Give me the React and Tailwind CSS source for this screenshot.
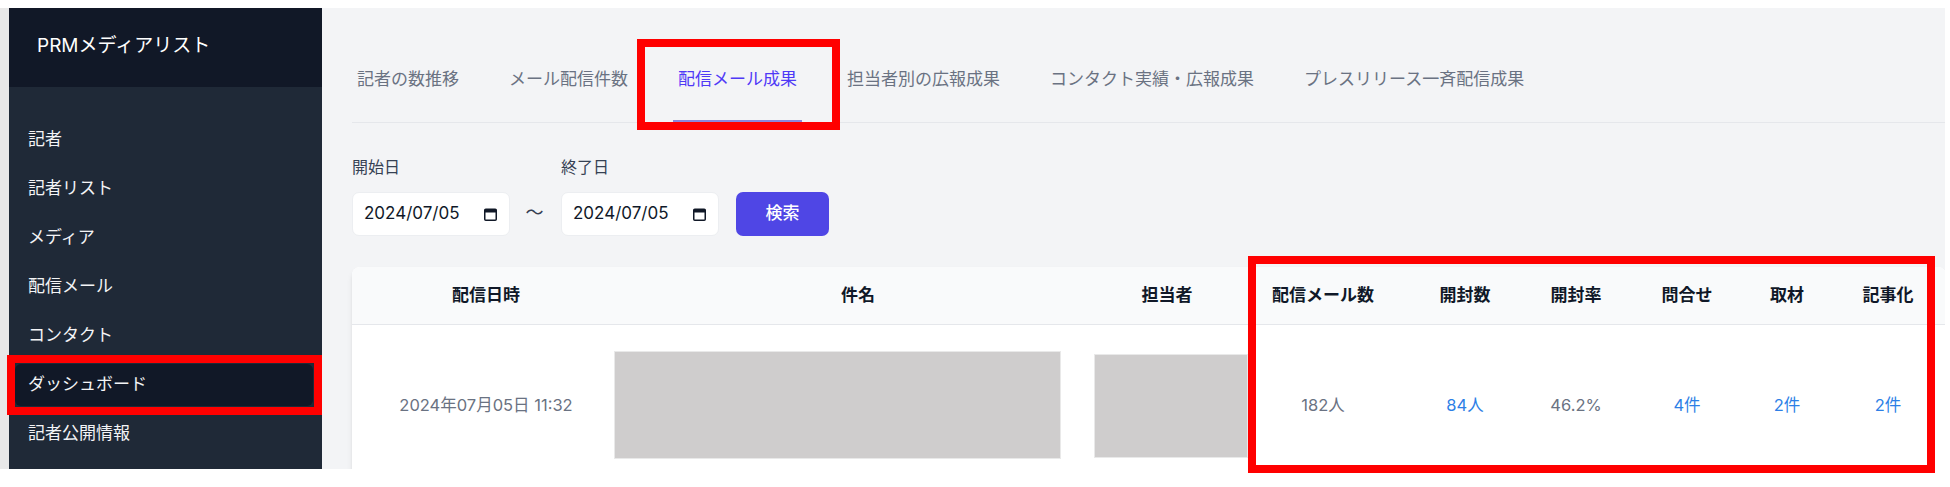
import React from "react";

const menuItems = [
  "記者",
  "記者リスト",
  "メディア",
  "配信メール",
  "コンタクト",
  "ダッシュボード",
  "記者公開情報",
];

const tabs = [
  "記者の数推移",
  "メール配信件数",
  "配信メール成果",
  "担当者別の広報成果",
  "コンタクト実績・広報成果",
  "プレスリリース一斉配信成果",
];

const headers = [
  { label: "配信日時", cls: "pl-[6px]" },
  { label: "件名", cls: "pl-[6px]" },
  { label: "担当者", cls: "" },
  { label: "配信メール数", cls: "" },
  { label: "開封数", cls: "" },
  { label: "開封率", cls: "" },
  { label: "問合せ", cls: "" },
  { label: "取材", cls: "" },
  { label: "記事化", cls: "" },
];

function CalendarIcon() {
  return (
    <svg width="13" height="14" viewBox="0 0 13 14" fill="none">
      <rect x="0.75" y="2.25" width="11.5" height="11" rx="1" stroke="#111827" strokeWidth="1.5" />
      <rect x="0.75" y="2.25" width="11.5" height="3.25" fill="#111827" />
    </svg>
  );
}

function DateField({ label, value }) {
  return (
    <div className="flex flex-col gap-[13px]">
      <span className="text-[16px] leading-[24px] text-gray-700">{label}</span>
      <div className="flex h-[44px] w-[158px] items-center justify-between rounded-[7px] border border-[#eceef1] bg-white pl-[11px] pr-[12px]">
        <span className="text-[17px] text-gray-900">{value}</span>
        <CalendarIcon />
      </div>
    </div>
  );
}

function RedBox({ className }) {
  return (
    <div
      className={`pointer-events-none absolute border-[8px] border-[#ff0000] ${className}`}
    />
  );
}

export default function App() {
  return (
    <div className="relative h-[487px] w-[1950px] overflow-hidden bg-white font-['Inter','Noto_Sans_CJK_JP',sans-serif]">
      <div className="mt-[8px] flex h-[461px]">
        <div className="w-[9px] bg-[#e8e8e8]" />

        {/* sidebar */}
        <aside className="flex w-[313px] flex-col bg-[#1f2937]">
          <div className="flex h-[79px] items-center bg-[#111827] pb-[2px] pl-[28px] text-[19px] text-white">
            PRMメディアリスト
          </div>
          <nav className="flex flex-col gap-[7px] pt-[32px]">
            {menuItems.map((item) => (
              <div
                key={item}
                className={`ml-[6px] mr-[9px] flex h-[42px] items-center rounded-[6px] pl-[13px] text-[17px] text-gray-100 ${
                  item === "ダッシュボード" ? "bg-[#111827]" : ""
                }`}
              >
                {item}
              </div>
            ))}
          </nav>
        </aside>

        {/* main */}
        <main className="w-[1623px] overflow-hidden bg-[#f3f4f6] pl-[30px]">
          <div className="mt-[30px] flex gap-[40px] border-b border-gray-200">
            {tabs.map((tab) => (
              <div
                key={tab}
                className={`flex h-[84px] items-center whitespace-nowrap px-[5px] text-[17px] ${
                  tab === "配信メール成果"
                    ? "border-b-2 border-[#8b87dc] pt-[2px] text-indigo-600"
                    : "text-gray-500"
                }`}
              >
                {tab}
              </div>
            ))}
          </div>

          <div className="mt-[32px] flex items-end">
            <DateField label="開始日" value="2024/07/05" />
            <div className="flex h-[44px] w-[51px] items-center justify-center pb-[4px] pr-[2px] text-[18px] text-gray-700">
              〜
            </div>
            <DateField label="終了日" value="2024/07/05" />
            <button className="ml-[17px] h-[44px] w-[93px] rounded-[7px] bg-[#4f46e5] text-[17px] font-medium text-white">
              検索
            </button>
          </div>

          <div className="mt-[31px] w-[1594px] rounded-t-lg bg-white shadow-md">
            <div className="grid h-[58px] grid-cols-[262px_482px_142px_170px_114px_108px_114px_86px_116px] items-center rounded-t-lg border-b border-gray-200 bg-[#f9fafb]">
              {headers.map((h) => (
                <div
                  key={h.label}
                  className={`text-center text-[17px] font-bold text-gray-900 ${h.cls}`}
                >
                  {h.label}
                </div>
              ))}
            </div>
            <div className="grid h-[160px] grid-cols-[262px_482px_142px_170px_114px_108px_114px_86px_116px] items-center text-[16.5px]">
              <div className="pl-[6px] text-center text-gray-500">2024年07月05日 11:32</div>
              <div>
                <div className="h-[108px] w-[447px] border border-[#e9e9e9] bg-[#cfcdcd]" />
              </div>
              <div>
                <div className="-ml-[2px] mt-[2px] h-[104px] w-[154px] border border-[#e9e9e9] bg-[#cfcdcd]" />
              </div>
              <div className="text-center text-gray-500">182人</div>
              <div className="text-center text-[#2d7fe6]">84人</div>
              <div className="text-center text-gray-500">46.2%</div>
              <div className="text-center text-[#2d7fe6]">4件</div>
              <div className="text-center text-[#2d7fe6]">2件</div>
              <div className="text-center text-[#2d7fe6]">2件</div>
            </div>
          </div>
        </main>
      </div>

      <RedBox className="left-[637px] top-[39px] h-[91px] w-[203px]" />
      <RedBox className="left-[7px] top-[355px] h-[60px] w-[315px]" />
      <RedBox className="left-[1248px] top-[256px] h-[217px] w-[687px]" />
    </div>
  );
}
